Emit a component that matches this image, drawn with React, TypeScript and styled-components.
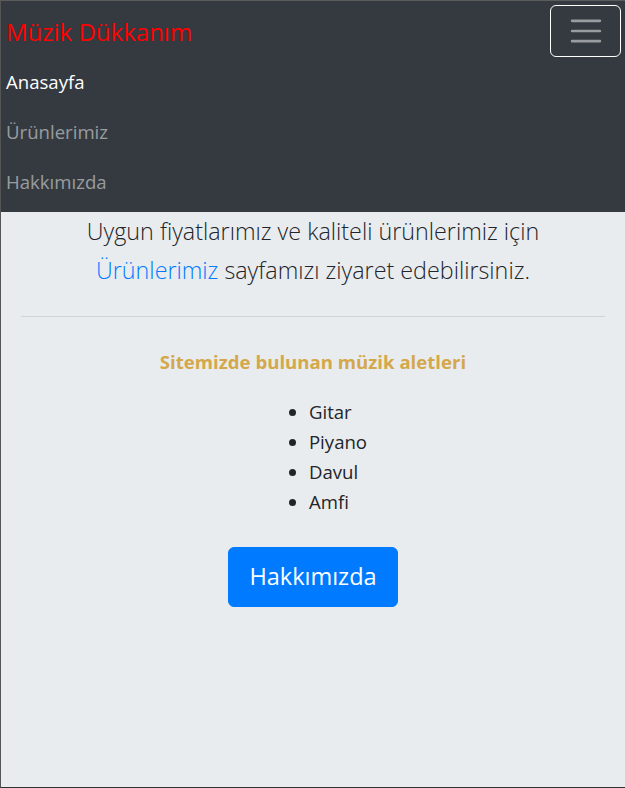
import React from 'react';
import styled, { createGlobalStyle } from 'styled-components';

const GlobalStyle = createGlobalStyle`
  html, body {
    margin: 0;
    padding: 0;
    background: #e9ecef;
  }
  body {
    font-family: "Open Sans", "Noto Sans", Arial, sans-serif;
    font-size: 18.6px;
    line-height: 30px;
    color: #212529;
  }
  *, *::before, *::after {
    box-sizing: border-box;
  }
`;

const Page = styled.div`
  min-height: 788px;
  border-top: 1px solid #5c5c5c;
  border-left: 1px solid #555;
  border-bottom: 1px solid #333;
  background: #e9ecef;
`;

const Navbar = styled.nav`
  background: #343a40;
  padding: 4px 4px 5px 5px;
`;

const NavTop = styled.div`
  display: flex;
  align-items: center;
  justify-content: space-between;
`;

const Brand = styled.a`
  color: #ff0000;
  font-size: 24px;
  line-height: 37.5px;
  padding: 8px 0 6px;
  text-decoration: none;
`;

const Toggler = styled.button`
  width: 71px;
  height: 52px;
  padding: 5px 15px;
  background: transparent;
  border: 1px solid #fff;
  border-radius: 6px;
  display: flex;
  align-items: center;
  justify-content: center;
  cursor: pointer;
`;

const NavList = styled.ul`
  list-style: none;
  margin: 0;
  padding: 0;
`;

const NavItem = styled.li``;

const NavLink = styled.a<{ $active?: boolean }>`
  display: block;
  padding: 10px 0;
  line-height: 30px;
  color: ${(p) => (p.$active ? '#fff' : 'rgba(255, 255, 255, 0.5)')};
  text-decoration: none;
`;

const Main = styled.main`
  padding: 0 20px;
  text-align: center;
`;

const Lead = styled.p`
  margin: 0;
  font-size: 23.3px;
  font-weight: 300;
  line-height: 38.5px;
`;

const LeadLink = styled.a`
  color: #007bff;
  text-decoration: none;
`;

const Divider = styled.hr`
  margin: 27px 0 30px;
  border: 0;
  border-top: 1px solid rgba(0, 0, 0, 0.1);
`;

const ListTitle = styled.p`
  margin: 0 0 20px;
  font-weight: 700;
  color: #d4a84a;
`;

const InstrumentList = styled.ul`
  display: inline-block;
  margin: 0 0 30px;
  padding-left: 50px;
  text-align: left;
  line-height: 30px;
`;

const PrimaryButton = styled.button`
  display: block;
  margin: 0 auto;
  padding: 10px 20px;
  font-family: inherit;
  font-size: 23.5px;
  line-height: 37.5px;
  color: #fff;
  background: #007bff;
  border: 1px solid #007bff;
  border-radius: 6px;
  cursor: pointer;
`;

const TogglerIcon = () => (
  <svg width="38" height="38" viewBox="0 0 30 30">
    <path
      stroke="rgba(255,255,255,0.5)"
      strokeLinecap="round"
      strokeMiterlimit={10}
      strokeWidth={2}
      d="M4 7h22M4 15h22M4 23h22"
    />
  </svg>
);

const instruments = ['Gitar', 'Piyano', 'Davul', 'Amfi'];

export default function App() {
  return (
    <Page>
      <GlobalStyle />
      <Navbar>
        <NavTop>
          <Brand href="#">Müzik Dükkanım</Brand>
          <Toggler aria-label="menu">
            <TogglerIcon />
          </Toggler>
        </NavTop>
        <NavList>
          <NavItem>
            <NavLink href="#" $active>
              Anasayfa
            </NavLink>
          </NavItem>
          <NavItem>
            <NavLink href="#">Ürünlerimiz</NavLink>
          </NavItem>
          <NavItem>
            <NavLink href="#">Hakkımızda</NavLink>
          </NavItem>
        </NavList>
      </Navbar>
      <Main>
        <Lead>
          Uygun fiyatlarımız ve kaliteli ürünlerimiz için
          <br />
          <LeadLink href="#">Ürünlerimiz</LeadLink> sayfamızı ziyaret edebilirsiniz.
        </Lead>
        <Divider />
        <ListTitle>Sitemizde bulunan müzik aletleri</ListTitle>
        <InstrumentList>
          {instruments.map((name) => (
            <li key={name}>{name}</li>
          ))}
        </InstrumentList>
        <PrimaryButton>Hakkımızda</PrimaryButton>
      </Main>
    </Page>
  );
}
